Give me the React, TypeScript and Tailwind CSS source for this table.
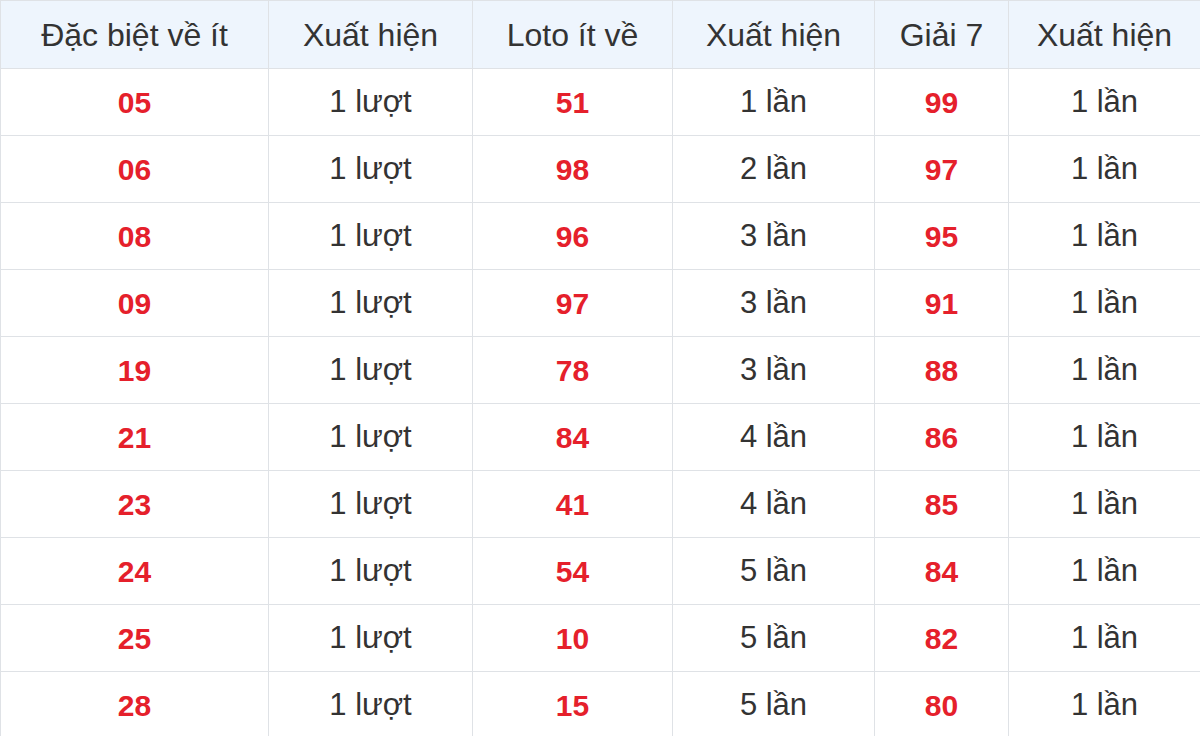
const rows: [string, string, string, string, string, string][] = [
  ['05', '1 lượt', '51', '1 lần', '99', '1 lần'],
  ['06', '1 lượt', '98', '2 lần', '97', '1 lần'],
  ['08', '1 lượt', '96', '3 lần', '95', '1 lần'],
  ['09', '1 lượt', '97', '3 lần', '91', '1 lần'],
  ['19', '1 lượt', '78', '3 lần', '88', '1 lần'],
  ['21', '1 lượt', '84', '4 lần', '86', '1 lần'],
  ['23', '1 lượt', '41', '4 lần', '85', '1 lần'],
  ['24', '1 lượt', '54', '5 lần', '84', '1 lần'],
  ['25', '1 lượt', '10', '5 lần', '82', '1 lần'],
  ['28', '1 lượt', '15', '5 lần', '80', '1 lần'],
];

const headers = ['Đặc biệt về ít', 'Xuất hiện', 'Loto ít về', 'Xuất hiện', 'Giải 7', 'Xuất hiện'];
const widths = ['w-[268px]', 'w-[204px]', 'w-[200px]', 'w-[202px]', 'w-[134px]', 'w-[192px]'];

export default function App() {
  return (
    <div className="w-[1200px] h-[736px] overflow-hidden bg-white font-['Liberation_Sans',Arial,sans-serif]">
      <table className="w-[1201px] table-fixed border-collapse text-[31px] text-[#333]">
        <colgroup>
          {widths.map((w, i) => (
            <col key={i} className={w} />
          ))}
        </colgroup>
        <thead>
          <tr className="h-[68px] bg-[#eef5fd]">
            {headers.map((h, i) => (
              <th key={i} className="border border-[#dfe2e6] font-normal text-[32px] text-center align-middle">
                {h}
              </th>
            ))}
          </tr>
        </thead>
        <tbody>
          {rows.map((r, i) => (
            <tr key={i} className="h-[67px]">
              {r.map((c, j) => (
                <td
                  key={j}
                  className={`border border-[#dfe2e6] text-center align-middle ${
                    j % 2 === 0 ? 'font-bold text-[30px] text-[#e5202b]' : ''
                  }`}
                >
                  {c}
                </td>
              ))}
            </tr>
          ))}
        </tbody>
      </table>
    </div>
  );
}
